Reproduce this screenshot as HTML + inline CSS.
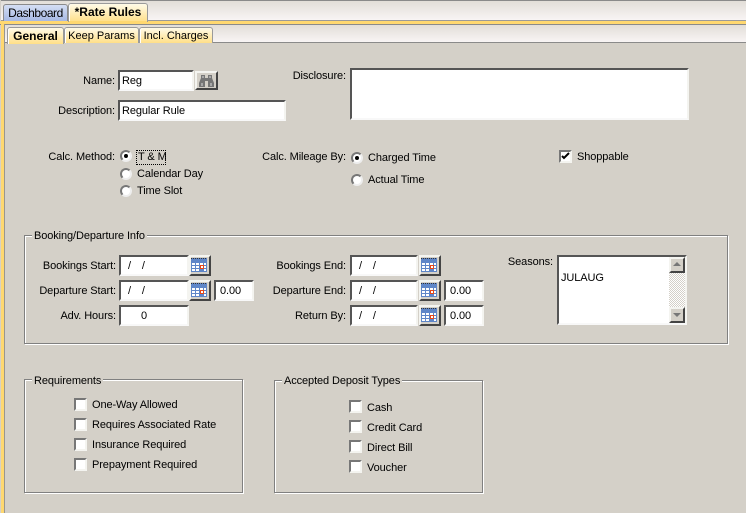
<!DOCTYPE html>
<html><head><meta charset="utf-8"><style>
html,body{margin:0;padding:0}
body{width:746px;height:513px;overflow:hidden;background:#d4d0c8;position:relative;font:11px/14px "Liberation Sans",sans-serif;letter-spacing:-.1px;color:#000}
.a,.l,.r,.t,.i,.c,.rb,.b,.g,.gl{position:absolute}
.l{text-align:right;white-space:nowrap}
.t{white-space:nowrap}
.i{background:#fff;box-sizing:border-box;border:2px solid;border-color:#555 #f4f4f0 #f8f8f8 #555;line-height:19px;padding-left:2px;white-space:nowrap;overflow:hidden}
.d{word-spacing:8px}
.c{width:13px;height:13px;box-sizing:border-box;background:#fff;border:2px solid;border-color:#777 #f4f4f0 #f4f4f0 #777}
.rb{width:12px;height:12px;box-sizing:border-box;border-radius:50%;background:#fff;border:2px solid;border-color:#777 #eee #eee #777}
.rb i{position:absolute;left:2px;top:2px;width:4px;height:4px;border-radius:50%;background:#000}
.b{box-sizing:border-box;background:#d4d0c8;border:2px solid;border-color:#f4f4f0 #444 #444 #f4f4f0}
.g{box-sizing:border-box;border:1px solid #808080;box-shadow:1px 1px 0 #fff, inset 1px 1px 0 #fff}
.gl{background:#d4d0c8;padding:0 2px;line-height:13px;white-space:nowrap}
.tab{position:absolute;box-sizing:border-box;background:linear-gradient(#fffbe8,#ffdf88);border:1px solid #9a9a9a;border-bottom:0;border-radius:3px 3px 0 0;text-align:center;box-shadow:inset 1px 0 0 #fff}
.cal{position:absolute;left:0;top:0}
</style></head><body>
<div class="a" style="left:0;top:0;width:746px;height:1px;background:#8a8a8a"></div>
<div class="a" style="left:0;top:1px;width:746px;height:19px;background:linear-gradient(#e2ded8,#f8f4f4)"></div>
<div class="a" style="left:0;top:20px;width:746px;height:1px;background:#9a9a9a"></div>
<div class="a" style="left:0;top:21px;width:746px;height:3px;background:#ffd870"></div>
<div class="a" style="left:0;top:24px;width:746px;height:1px;background:#8a8a8a"></div>
<div class="a" style="left:1px;top:21px;width:3px;height:492px;background:#ffd870"></div>
<div class="a" style="left:4px;top:24px;width:1px;height:489px;background:#9a968e"></div>
<div class="a" style="left:5px;top:25px;width:741px;height:17px;background:linear-gradient(#e2ded8,#f8f4f4)"></div>
<div class="a" style="left:5px;top:42px;width:741px;height:1px;background:#8a8a8a"></div>
<div class="a" style="left:0;top:0;width:1px;height:21px;background:#d4d0c8"></div>

<div class="a" style="left:3px;top:4px;width:65px;height:17px;box-sizing:border-box;background:linear-gradient(#d4def4,#a6b8e4);border:1px solid #8a8a8a;border-bottom:0;border-radius:3px 3px 0 0;text-align:center;line-height:16px;font-size:12px;letter-spacing:-.45px">Dashboard</div>
<div class="tab" style="left:68px;top:3px;width:80px;height:19px;line-height:17px;font-weight:bold;font-size:12px;letter-spacing:0;background:linear-gradient(#fffbe8,#ffdf88)">*Rate Rules</div>
<div class="a" style="left:69px;top:21px;width:78px;height:3px;background:#ffd870"></div>

<div class="tab" style="left:7px;top:27px;width:57px;height:17px;line-height:17px;font-weight:bold;font-size:12px;letter-spacing:0;z-index:2">General</div>
<div class="tab" style="left:64px;top:27px;width:75px;height:16px;line-height:16px;font-size:11px;letter-spacing:0">Keep Params</div>
<div class="tab" style="left:139px;top:27px;width:74px;height:16px;line-height:16px;font-size:11px;letter-spacing:0">Incl. Charges</div>

<div class="l" style="right:631px;top:74px">Name:</div>
<div class="i" style="left:118px;top:70px;width:76px;height:21px">Reg</div>
<div class="b" style="left:195px;top:71px;width:23px;height:19px">
<svg width="19" height="15" style="position:absolute;left:0;top:0"><path d="M4 2h4v3h3V2h4v3l2 5v4h-6V8H8v6H2v-4l2-5z" fill="#767676"/><path d="M5 3h2v2H5zM12 3h2v2h-2zM4 10h2v3H4zM13 10h2v3h-2z" fill="#a8a8a8"/></svg></div>
<div class="l" style="right:631px;top:104px">Description:</div>
<div class="i" style="left:118px;top:100px;width:168px;height:21px">Regular Rule</div>
<div class="l" style="right:400px;top:69px">Disclosure:</div>
<div class="i" style="left:350px;top:68px;width:339px;height:52px"></div>

<div class="l" style="right:631px;top:150px">Calc. Method:</div>
<div class="rb" style="left:120px;top:150px"><i></i></div>
<div class="a" style="left:136px;top:150px;width:30px;height:15px;box-sizing:border-box;border:1px dotted #000;line-height:13px;padding-left:1px;white-space:nowrap">T &amp; M</div>
<div class="rb" style="left:120px;top:168px"></div><div class="t" style="left:137px;top:167px">Calendar Day</div>
<div class="rb" style="left:120px;top:185px"></div><div class="t" style="left:137px;top:184px">Time Slot</div>
<div class="l" style="right:400px;top:150px">Calc. Mileage By:</div>
<div class="rb" style="left:351px;top:152px"><i></i></div><div class="t" style="left:368px;top:151px">Charged Time</div>
<div class="rb" style="left:351px;top:174px"></div><div class="t" style="left:368px;top:173px">Actual Time</div>
<div class="c" style="left:559px;top:150px"><svg width="9" height="9" style="position:absolute;left:0;top:0"><path d="M1 4l2 2 5-5" fill="none" stroke="#000" stroke-width="2"/></svg></div>
<div class="t" style="left:577px;top:150px">Shoppable</div>

<div class="g" style="left:24px;top:235px;width:704px;height:109px"></div>
<div class="gl" style="left:32px;top:230px">Booking/Departure Info</div>
<div class="l" style="right:630px;top:259px">Bookings Start:</div>
<div class="i d" style="left:119px;top:255px;width:70px;height:21px;padding-left:7px">/ /</div>
<div class="b" style="left:189px;top:255px;width:22px;height:21px"><svg class="cal" width="18" height="17"><rect x="0" y="1" width="16" height="14" fill="#5f86c8"/><path d="M0 1.500h16" stroke="#333" stroke-dasharray="1 1"/><rect x="1" y="6" width="3" height="2" fill="#fff"/><rect x="5" y="6" width="3" height="2" fill="#fff"/><rect x="9" y="6" width="3" height="2" fill="#fff"/><rect x="13" y="6" width="2" height="2" fill="#fff"/><rect x="1" y="9" width="3" height="2" fill="#fff"/><rect x="5" y="9" width="3" height="2" fill="#fff"/><rect x="13" y="9" width="2" height="2" fill="#fff"/><rect x="1" y="12" width="3" height="2" fill="#fff"/><rect x="5" y="12" width="3" height="2" fill="#fff"/><rect x="13" y="12" width="2" height="2" fill="#fff"/><rect x="9.500" y="8.500" width="3" height="3" fill="#fff" stroke="#e84818"/></svg></div>
<div class="l" style="right:630px;top:284px">Departure Start:</div>
<div class="i d" style="left:119px;top:280px;width:70px;height:21px;padding-left:7px">/ /</div>
<div class="b" style="left:189px;top:280px;width:22px;height:21px"><svg class="cal" width="18" height="17"><rect x="0" y="1" width="16" height="14" fill="#5f86c8"/><path d="M0 1.500h16" stroke="#333" stroke-dasharray="1 1"/><rect x="1" y="6" width="3" height="2" fill="#fff"/><rect x="5" y="6" width="3" height="2" fill="#fff"/><rect x="9" y="6" width="3" height="2" fill="#fff"/><rect x="13" y="6" width="2" height="2" fill="#fff"/><rect x="1" y="9" width="3" height="2" fill="#fff"/><rect x="5" y="9" width="3" height="2" fill="#fff"/><rect x="13" y="9" width="2" height="2" fill="#fff"/><rect x="1" y="12" width="3" height="2" fill="#fff"/><rect x="5" y="12" width="3" height="2" fill="#fff"/><rect x="13" y="12" width="2" height="2" fill="#fff"/><rect x="9.500" y="8.500" width="3" height="3" fill="#fff" stroke="#e84818"/></svg></div>
<div class="i" style="left:214px;top:280px;width:40px;height:21px;padding-left:4px">0.00</div>
<div class="l" style="right:630px;top:309px">Adv. Hours:</div>
<div class="i" style="left:119px;top:305px;width:70px;height:21px;padding-left:20px">0</div>

<div class="l" style="right:400px;top:259px">Bookings End:</div>
<div class="i d" style="left:350px;top:255px;width:68px;height:21px;padding-left:7px">/ /</div>
<div class="b" style="left:419px;top:255px;width:22px;height:21px"><svg class="cal" width="18" height="17"><rect x="0" y="1" width="16" height="14" fill="#5f86c8"/><path d="M0 1.500h16" stroke="#333" stroke-dasharray="1 1"/><rect x="1" y="6" width="3" height="2" fill="#fff"/><rect x="5" y="6" width="3" height="2" fill="#fff"/><rect x="9" y="6" width="3" height="2" fill="#fff"/><rect x="13" y="6" width="2" height="2" fill="#fff"/><rect x="1" y="9" width="3" height="2" fill="#fff"/><rect x="5" y="9" width="3" height="2" fill="#fff"/><rect x="13" y="9" width="2" height="2" fill="#fff"/><rect x="1" y="12" width="3" height="2" fill="#fff"/><rect x="5" y="12" width="3" height="2" fill="#fff"/><rect x="13" y="12" width="2" height="2" fill="#fff"/><rect x="9.500" y="8.500" width="3" height="3" fill="#fff" stroke="#e84818"/></svg></div>
<div class="l" style="right:400px;top:284px">Departure End:</div>
<div class="i d" style="left:350px;top:280px;width:68px;height:21px;padding-left:7px">/ /</div>
<div class="b" style="left:419px;top:280px;width:22px;height:21px"><svg class="cal" width="18" height="17"><rect x="0" y="1" width="16" height="14" fill="#5f86c8"/><path d="M0 1.500h16" stroke="#333" stroke-dasharray="1 1"/><rect x="1" y="6" width="3" height="2" fill="#fff"/><rect x="5" y="6" width="3" height="2" fill="#fff"/><rect x="9" y="6" width="3" height="2" fill="#fff"/><rect x="13" y="6" width="2" height="2" fill="#fff"/><rect x="1" y="9" width="3" height="2" fill="#fff"/><rect x="5" y="9" width="3" height="2" fill="#fff"/><rect x="13" y="9" width="2" height="2" fill="#fff"/><rect x="1" y="12" width="3" height="2" fill="#fff"/><rect x="5" y="12" width="3" height="2" fill="#fff"/><rect x="13" y="12" width="2" height="2" fill="#fff"/><rect x="9.500" y="8.500" width="3" height="3" fill="#fff" stroke="#e84818"/></svg></div>
<div class="i" style="left:444px;top:280px;width:40px;height:21px;padding-left:4px">0.00</div>
<div class="l" style="right:400px;top:309px">Return By:</div>
<div class="i d" style="left:350px;top:305px;width:68px;height:21px;padding-left:7px">/ /</div>
<div class="b" style="left:419px;top:305px;width:22px;height:21px"><svg class="cal" width="18" height="17"><rect x="0" y="1" width="16" height="14" fill="#5f86c8"/><path d="M0 1.500h16" stroke="#333" stroke-dasharray="1 1"/><rect x="1" y="6" width="3" height="2" fill="#fff"/><rect x="5" y="6" width="3" height="2" fill="#fff"/><rect x="9" y="6" width="3" height="2" fill="#fff"/><rect x="13" y="6" width="2" height="2" fill="#fff"/><rect x="1" y="9" width="3" height="2" fill="#fff"/><rect x="5" y="9" width="3" height="2" fill="#fff"/><rect x="13" y="9" width="2" height="2" fill="#fff"/><rect x="1" y="12" width="3" height="2" fill="#fff"/><rect x="5" y="12" width="3" height="2" fill="#fff"/><rect x="13" y="12" width="2" height="2" fill="#fff"/><rect x="9.500" y="8.500" width="3" height="3" fill="#fff" stroke="#e84818"/></svg></div>
<div class="i" style="left:444px;top:305px;width:40px;height:21px;padding-left:4px">0.00</div>

<div class="l" style="right:193px;top:255px">Seasons:</div>
<div class="i" style="left:557px;top:255px;width:130px;height:70px"><div style="position:absolute;left:2px;top:14px;line-height:15px">JULAUG</div></div>
<div class="a" style="left:669px;top:257px;width:16px;height:66px;background:repeating-conic-gradient(#fff 0 25%,#d4d0c8 0 50%) 0 0/2px 2px"></div>
<div class="b" style="left:669px;top:257px;width:16px;height:16px"><div style="position:absolute;left:2px;top:3px;border:4px solid transparent;border-top:0;border-bottom:4px solid #777"></div></div>
<div class="b" style="left:669px;top:307px;width:16px;height:16px"><div style="position:absolute;left:2px;top:4px;border:4px solid transparent;border-bottom:0;border-top:4px solid #777"></div></div>

<div class="g" style="left:24px;top:379px;width:219px;height:114px"></div>
<div class="gl" style="left:32px;top:374px;line-height:15px">Requirements</div>
<div class="c" style="left:74px;top:398px"></div><div class="t" style="left:92px;top:398px">One-Way Allowed</div>
<div class="c" style="left:74px;top:418px"></div><div class="t" style="left:92px;top:418px">Requires Associated Rate</div>
<div class="c" style="left:74px;top:438px"></div><div class="t" style="left:92px;top:438px">Insurance Required</div>
<div class="c" style="left:74px;top:458px"></div><div class="t" style="left:92px;top:458px">Prepayment Required</div>

<div class="g" style="left:274px;top:380px;width:209px;height:113px"></div>
<div class="gl" style="left:282px;top:374px;line-height:15px">Accepted Deposit Types</div>
<div class="c" style="left:349px;top:400px"></div><div class="t" style="left:367px;top:401px">Cash</div>
<div class="c" style="left:349px;top:420px"></div><div class="t" style="left:367px;top:421px">Credit Card</div>
<div class="c" style="left:349px;top:440px"></div><div class="t" style="left:367px;top:441px">Direct Bill</div>
<div class="c" style="left:349px;top:460px"></div><div class="t" style="left:367px;top:461px">Voucher</div>
</body></html>
